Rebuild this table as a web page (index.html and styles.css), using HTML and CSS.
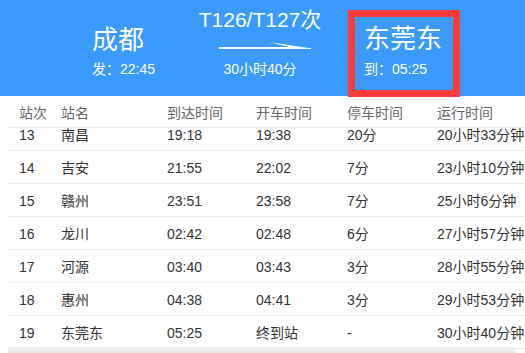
FILE: index.html
```html
<!DOCTYPE html>
<html lang="zh-CN">
<head>
<meta charset="utf-8">
<title>T126/T127次</title>
<link rel="stylesheet" href="styles.css">
</head>
<body>
<header class="hero">
  <div class="stop stop-from">
    <div class="stop-name">成都</div>
    <div class="stop-time">发：22:45</div>
  </div>
  <div class="train">
    <div class="train-no">T126/T127次</div>
    <svg class="arrow" width="94" height="10" viewBox="0 0 94 10">
      <rect x="0" y="5" width="78" height="2" fill="#fff"/>
      <polygon points="50,0 92,6.5 60,6.8 70,5" fill="#fff"/>
      <polygon points="60,5 92,6 92,7 60,7" fill="#fff"/>
    </svg>
    <div class="train-dur">30小时40分</div>
  </div>
  <div class="stop stop-to">
    <div class="stop-name">东莞东</div>
    <div class="stop-time">到：05:25</div>
  </div>
</header>

<section class="table">
  <div class="row head">
    <span>站次</span><span>站名</span><span>到达时间</span><span>开车时间</span><span>停车时间</span><span>运行时间</span>
  </div>
  <div class="scroll">
    <div class="rows">
      <div class="row"><span>13</span><span>南昌</span><span>19:18</span><span>19:38</span><span>20分</span><span>20小时33分钟</span></div>
      <div class="row"><span>14</span><span>吉安</span><span>21:55</span><span>22:02</span><span>7分</span><span>23小时10分钟</span></div>
      <div class="row"><span>15</span><span>赣州</span><span>23:51</span><span>23:58</span><span>7分</span><span>25小时6分钟</span></div>
      <div class="row"><span>16</span><span>龙川</span><span>02:42</span><span>02:48</span><span>6分</span><span>27小时57分钟</span></div>
      <div class="row"><span>17</span><span>河源</span><span>03:40</span><span>03:43</span><span>3分</span><span>28小时55分钟</span></div>
      <div class="row"><span>18</span><span>惠州</span><span>04:38</span><span>04:41</span><span>3分</span><span>29小时53分钟</span></div>
      <div class="row"><span>19</span><span>东莞东</span><span>05:25</span><span>终到站</span><span>-</span><span>30小时40分钟</span></div>
    </div>
    <div class="fade"></div>
  </div>
</section>
</body>
</html>
```

FILE: styles.css
```css
html, body {
  margin: 0;
  padding: 0;
  background: #fff;
  overflow: hidden;
}
body {
  font-family: "Liberation Sans", "Noto Sans CJK SC", sans-serif;
  color: #333;
  width: 525px;
  height: 353px;
}
.hero {
  height: 96px;
  background: #3a9bfc;
  color: #fff;
  display: flex;
  align-items: flex-start;
  padding-left: 92px;
  box-sizing: border-box;
}
.stop-from {
  width: 98px;
  padding-top: 25px;
}
.stop-name {
  font-size: 26px;
  line-height: 30px;
}
.stop-time {
  font-size: 14px;
  line-height: 18px;
  margin-top: 5px;
}
.train {
  width: 140px;
  display: flex;
  flex-direction: column;
  align-items: center;
  padding-top: 8px;
}
.train-no {
  font-size: 21px;
  line-height: 24px;
}
.arrow {
  display: block;
  margin-top: 10px;
  margin-left: 12px;
}
.train-dur {
  font-size: 14px;
  line-height: 18px;
  margin-top: 8px;
}
.stop-to {
  margin-left: 18px;
  margin-top: 10px;
  width: 112px;
  height: 87px;
  box-sizing: border-box;
  border: 7px solid #fb3a3a;
  padding: 7px 0 0 9px;
  position: relative;
  z-index: 2;
}
.stop-to .stop-time {
  margin-top: 6px;
}
.table {
  margin-left: 8px;
}
.row {
  display: grid;
  grid-template-columns: 42px 106px 89px 91px 90px 1fr;
  padding-left: 11px;
  padding-top: 2px;
  height: 33px;
  box-sizing: border-box;
  border-bottom: 1px solid #ededed;
  align-items: center;
  font-size: 14px;
  line-height: 18px;
  white-space: nowrap;
}
.row.head {
  height: 32px;
  color: #666;
}
.scroll {
  height: 225px;
  overflow: hidden;
  position: relative;
}
.rows {
  margin-top: -10px;
}
.fade {
  position: absolute;
  left: 0;
  right: 10px;
  bottom: 0;
  height: 8px;
  background: linear-gradient(to bottom, rgba(232,232,232,0), #e6e6e6);
}
```
